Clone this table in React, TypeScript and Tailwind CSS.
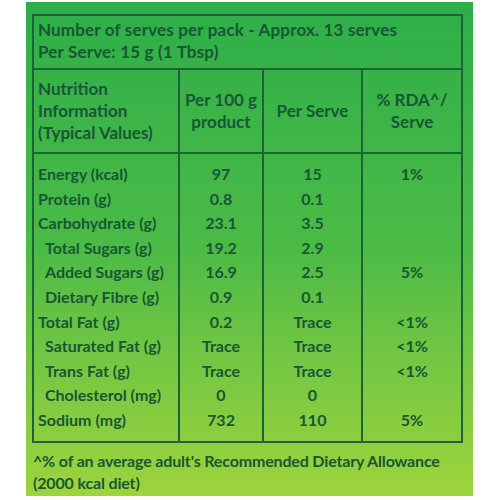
import React from "react";

const rows: { label: string; indent?: boolean; per100: string; perServe: string; rda?: string }[] = [
  { label: "Energy (kcal)", per100: "97", perServe: "15", rda: "1%" },
  { label: "Protein (g)", per100: "0.8", perServe: "0.1" },
  { label: "Carbohydrate (g)", per100: "23.1", perServe: "3.5" },
  { label: "Total Sugars (g)", indent: true, per100: "19.2", perServe: "2.9" },
  { label: "Added Sugars (g)", indent: true, per100: "16.9", perServe: "2.5", rda: "5%" },
  { label: "Dietary Fibre (g)", indent: true, per100: "0.9", perServe: "0.1" },
  { label: "Total Fat (g)", per100: "0.2", perServe: "Trace", rda: "<1%" },
  { label: "Saturated Fat (g)", indent: true, per100: "Trace", perServe: "Trace", rda: "<1%" },
  { label: "Trans Fat (g)", indent: true, per100: "Trace", perServe: "Trace", rda: "<1%" },
  { label: "Cholesterol (mg)", indent: true, per100: "0", perServe: "0" },
  { label: "Sodium (mg)", per100: "732", perServe: "110", rda: "5%" },
];

const cell = "border-2 border-[#1a6439]";

const App: React.FC = () => {
  return (
    <div className="w-[500px] h-[500px] bg-white pt-[2px] pl-[26px] font-['Lato',sans-serif] text-[#175734]">
      <div className="w-[447px] h-[494px] bg-linear-to-b from-[#2dae49] via-[#4bbb46] to-[#9dd43c] pt-[12px] pl-[6px]">
        <table className="w-[429px] border-collapse border-2 border-[#1a6439] table-fixed">
          <colgroup>
            <col className="w-[146px]" />
            <col className="w-[84px]" />
            <col className="w-[99px]" />
            <col className="w-[100px]" />
          </colgroup>
          <tbody>
            <tr>
              <td colSpan={4} className={`${cell} h-[54px] px-[4px] pt-[3px] align-top text-[17px] leading-[22px] font-bold tracking-[0.01em]`}>
                <div>Number of serves per pack - Approx. 13 serves</div>
                <div>Per Serve: 15 g (1 Tbsp)</div>
              </td>
            </tr>
            <tr className="h-[84px] text-[17px] leading-[22px] font-bold">
              <td className={`${cell} px-[4px]`}>
                <div>Nutrition</div>
                <div>Information</div>
                <div>(Typical Values)</div>
              </td>
              <td className={`${cell} text-center`}>
                <div>Per 100 g</div>
                <div>product</div>
              </td>
              <td className={`${cell} text-center`}>Per Serve</td>
              <td className={`${cell} text-center`}>
                <div>% RDA^/</div>
                <div>Serve</div>
              </td>
            </tr>
            <tr className="text-[16px] leading-[24.6px] font-bold">
              <td className={`${cell} px-[4px] pt-[8px] pb-[8px] align-top`}>
                {rows.map((r) => (
                  <div key={r.label} className={r.indent ? "pl-[7px]" : ""}>
                    {r.label}
                  </div>
                ))}
              </td>
              <td className={`${cell} pt-[8px] pb-[8px] text-center align-top`}>
                {rows.map((r) => (
                  <div key={r.label}>{r.per100}</div>
                ))}
              </td>
              <td className={`${cell} pt-[8px] pb-[8px] text-center align-top`}>
                {rows.map((r) => (
                  <div key={r.label}>{r.perServe}</div>
                ))}
              </td>
              <td className={`${cell} pt-[8px] pb-[8px] text-center align-top`}>
                {rows.map((r) => (
                  <div key={r.label}>{r.rda ?? "\u00a0"}</div>
                ))}
              </td>
            </tr>
          </tbody>
        </table>
        <div className="mt-[7px] pl-[1px] text-[16px] leading-[22px] font-bold tracking-[-0.01em]">
          <div>^% of an average adult's Recommended Dietary Allowance</div>
          <div>(2000 kcal diet)</div>
        </div>
      </div>
    </div>
  );
};

export default App;
